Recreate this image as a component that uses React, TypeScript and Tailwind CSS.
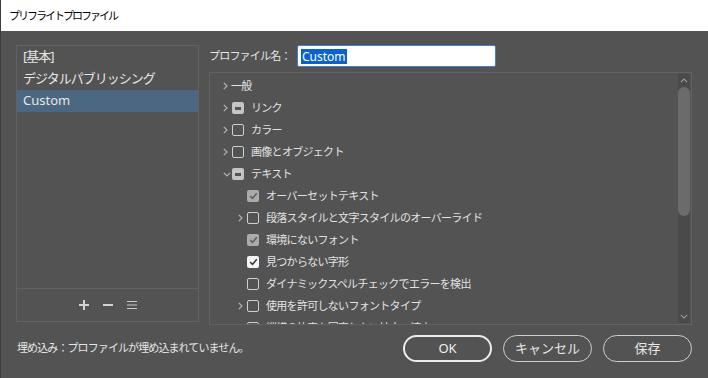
import React from "react";

type CB = "none" | "empty" | "mixed" | "checkedGray" | "checked";
type Row = { label: string; level: 1 | 2; chevron?: "right" | "down" | null; cb: CB };

const rows: Row[] = [
  { label: "一般", level: 1, chevron: "right", cb: "none" },
  { label: "リンク", level: 1, chevron: "right", cb: "mixed" },
  { label: "カラー", level: 1, chevron: "right", cb: "empty" },
  { label: "画像とオブジェクト", level: 1, chevron: "right", cb: "empty" },
  { label: "テキスト", level: 1, chevron: "down", cb: "mixed" },
  { label: "オーバーセットテキスト", level: 2, chevron: null, cb: "checkedGray" },
  { label: "段落スタイルと文字スタイルのオーバーライド", level: 2, chevron: "right", cb: "empty" },
  { label: "環境にないフォント", level: 2, chevron: null, cb: "checkedGray" },
  { label: "見つからない字形", level: 2, chevron: null, cb: "checked" },
  { label: "ダイナミックスペルチェックでエラーを検出", level: 2, chevron: null, cb: "empty" },
  { label: "使用を許可しないフォントタイプ", level: 2, chevron: "right", cb: "empty" },
  { label: "縦横の比率を固定しない拡大・縮小", level: 2, chevron: null, cb: "empty" },
];

function Chevron({ dir }: { dir: "right" | "down" }) {
  return dir === "right" ? (
    <svg width="5" height="8" viewBox="0 0 5 8" className="block">
      <path d="M0.8 0.8 L4 4 L0.8 7.2" fill="none" stroke="#b4b4b4" strokeWidth="1.2" />
    </svg>
  ) : (
    <svg width="8" height="5" viewBox="0 0 8 5" className="block">
      <path d="M0.8 0.8 L4 4 L7.2 0.8" fill="none" stroke="#b4b4b4" strokeWidth="1.2" />
    </svg>
  );
}

function Box({ cb }: { cb: CB }) {
  if (cb === "empty")
    return <div className="w-[12px] h-[12px] rounded-[2px] border border-[#cfcfcf] shrink-0" />;
  if (cb === "mixed")
    return (
      <div className="w-[12px] h-[12px] rounded-[2px] bg-[#c4c4c4] flex items-center justify-center shrink-0">
        <div className="w-[6px] h-[3px] bg-[#535353]" />
      </div>
    );
  const gray = cb === "checkedGray";
  return (
    <div
      className={
        "w-[12px] h-[12px] rounded-[2px] flex items-center justify-center shrink-0 " +
        (gray ? "bg-[#ababab]" : "bg-[#f4f4f4]")
      }
    >
      <svg width="9" height="8" viewBox="0 0 9 8">
        <path d="M1.2 4.2 L3.5 6.4 L7.8 1.2" fill="none" stroke={gray ? "#5e5e5e" : "#3a3a3a"} strokeWidth="1.6" />
      </svg>
    </div>
  );
}

function TreeRow({ r }: { r: Row }) {
  const indent = r.level === 1 ? "pl-[13px]" : "pl-[28px]";
  return (
    <div className={"h-[22px] flex items-center shrink-0 " + indent}>
      <div className="w-[9px] flex items-center justify-start shrink-0">
        {r.chevron ? <Chevron dir={r.chevron} /> : null}
      </div>
      {r.cb !== "none" ? (
        <>
          <Box cb={r.cb} />
          <span className="ml-[7px] text-[11px] tracking-[-0.7px] text-[#e2e2e2] whitespace-nowrap">{r.label}</span>
        </>
      ) : (
        <span className="ml-[-1px] text-[11px] tracking-[-0.7px] text-[#e2e2e2] whitespace-nowrap">{r.label}</span>
      )}
    </div>
  );
}

export default function App() {
  return (
    <div
      className="w-[708px] h-[378px] bg-[#535353] flex flex-col overflow-hidden border-l border-[#3c3c3c]"
      style={{ fontFamily: '"Noto Sans", "Noto Sans CJK JP", sans-serif' }}
    >
      <div className="h-[31px] bg-white flex items-center pl-[8px] pt-[1px] shrink-0">
        <span className="text-[11px] tracking-[-2px] text-black">プリフライトプロファイル</span>
      </div>
      <div className="flex pl-[15px] pr-[16px] pt-[14px] gap-[10px]">
        {/* left panel */}
        <div className="w-[183px] h-[277px] border border-[#626262] flex flex-col shrink-0">
          <div className="flex-1 flex flex-col text-[13px] tracking-[-1px] text-[#e6e6e6]">
            <div className="h-[22px] flex items-center pl-[6px]">[基本]</div>
            <div className="h-[22px] flex items-center pl-[6px]">デジタルパブリッシング</div>
            <div className="h-[22px] flex items-center pl-[6px] bg-[#4b6782] tracking-normal">Custom</div>
          </div>
          <div className="h-[33px] border-t border-[#626262] flex items-center justify-center gap-[10px] text-[#d0d0d0]">
            <svg width="12" height="12" viewBox="0 0 12 12">
              <path d="M6 1 V11 M1 6 H11" stroke="#d2d2d2" strokeWidth="2" />
            </svg>
            <svg width="12" height="12" viewBox="0 0 12 12" className="ml-[2px]">
              <path d="M1 6 H11" stroke="#d2d2d2" strokeWidth="2" />
            </svg>
            <svg width="12" height="12" viewBox="0 0 12 12" className="ml-[2px]">
              <path d="M1 2.5 H11 M1 6 H11 M1 9.5 H11" stroke="#c8c8c8" strokeWidth="1" />
            </svg>
          </div>
        </div>
        {/* right */}
        <div className="flex-1 flex flex-col">
          <div className="flex items-center h-[22px] mb-[5px]">
            <span className="text-[11px] tracking-[-0.8px] text-[#e6e6e6] w-[88px] shrink-0 whitespace-nowrap">プロファイル名：</span>
            <div className="w-[199px] h-[22px] bg-white border border-[#3d7fd0] rounded-[2px] flex items-center pl-[3px]">
              <span className="text-[12px] text-white bg-[#0a64c8] leading-[15px] px-[1px]">Custom</span>
            </div>
          </div>
          <div className="h-[253px] border border-[#626262] flex">
            <div className="flex-1 flex flex-col pt-[2px] overflow-hidden">
              {rows.map((r, i) => (
                <TreeRow key={i} r={r} />
              ))}
            </div>
            <div className="w-[12px] mr-[1px] my-[1px] bg-[#4a4a4a] flex flex-col items-center">
              <div className="h-[13px] flex items-center justify-center">
                <svg width="8" height="5" viewBox="0 0 8 5">
                  <path d="M0.8 4.2 L4 1 L7.2 4.2" fill="none" stroke="#9a9a9a" strokeWidth="1.1" />
                </svg>
              </div>
              <div className="w-[12px] h-[129px] rounded-[6px] bg-[#6b6b6b]" />
              <div className="flex-1" />
              <div className="h-[13px] flex items-center justify-center">
                <svg width="8" height="5" viewBox="0 0 8 5">
                  <path d="M0.8 0.8 L4 4 L7.2 0.8" fill="none" stroke="#9a9a9a" strokeWidth="1.1" />
                </svg>
              </div>
            </div>
          </div>
        </div>
      </div>
      <div className="flex items-center pl-[16px] pr-[16px] mt-[10px]">
        <span className="text-[11px] tracking-[-0.9px] text-[#e6e6e6] flex-1">埋め込み：プロファイルが埋め込まれていません。</span>
        <div className="flex gap-[11px]">
          <button className="w-[89px] h-[27px] rounded-full border-2 border-[#ececec] text-[13px] text-[#f0f0f0]">OK</button>
          <button className="w-[89px] h-[27px] rounded-full border border-[#cfcfcf] text-[13px] text-[#e6e6e6]">キャンセル</button>
          <button className="w-[89px] h-[27px] rounded-full border border-[#cfcfcf] text-[13px] text-[#e6e6e6]">保存</button>
        </div>
      </div>
    </div>
  );
}
